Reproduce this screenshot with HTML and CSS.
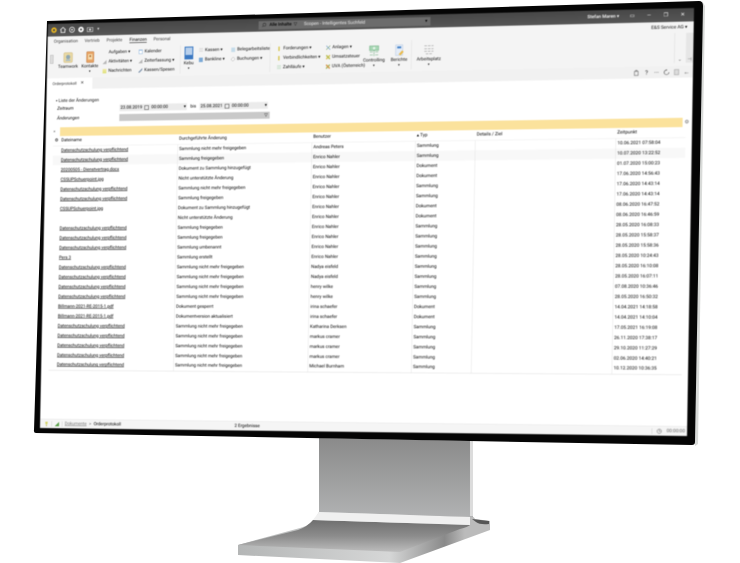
FILE: index.html
```html
<!DOCTYPE html>
<html lang="de">
<head>
<meta charset="utf-8">
<title>Orderprotokoll</title>
<link rel="stylesheet" href="styles.css">
</head>
<body>
<div class="stage">
  <svg class="hardware" width="740" height="563" viewBox="0 0 740 563">
    <defs>
      <linearGradient id="neck" x1="0" y1="0" x2="0" y2="1"><stop offset="0" stop-color="#8a8a8a"/><stop offset="1" stop-color="#b2b3b4"/></linearGradient>
      <linearGradient id="plate" x1="0" y1="0" x2="0" y2="1"><stop offset="0" stop-color="#6f6f6f"/><stop offset=".5" stop-color="#8c8c8c"/><stop offset="1" stop-color="#bdbdbd"/></linearGradient>
      <linearGradient id="front" x1="0" y1="0" x2="1" y2="0"><stop offset="0" stop-color="#b4b6b6"/><stop offset=".6" stop-color="#d6d7d7"/><stop offset=".82" stop-color="#8a8a8a"/><stop offset=".9" stop-color="#bbb"/></linearGradient>
    </defs>
    <path d="M319 438 L473 441 L473 520 L319 516 Z" fill="url(#neck)"/>
    <path d="M470 441 L473 441 L473 516 L470 516 Z" fill="#dcdcdc"/>
    <path d="M319 512 L470 517 Q474 516 475 519 L490 521 L490 530 L400 563 L238 555 L238 545 L300 528 Q313 525 319 512 Z" fill="url(#front)"/>
    <path d="M313 520 L470 525 Q468 527 460 529 L400 552 L238 545 L298 530 Q307 527 313 520 Z" fill="url(#plate)"/>
    <path d="M319 512 L470 517 L470 525 L313 520 Z" fill="#f0f0f0"/>
    <path d="M472 519 L489 521 L489 524 Q480 525 476 522 Z" fill="#555"/>
    <path d="M702 1 L705 6 L698 444 L695 446 Z" fill="#d8dad8"/>
    <path d="M47 21 L699 1 Q703 1 703 6 L695 442 Q695 445 692 445 L36 433 Q33.500 433 34 430 Z" fill="#050505"/>
  </svg>

  <main class="screen">
    <header class="titlebar">
      <div class="quick">
        <svg class="q" viewBox="0 0 12 12"><circle cx="6" cy="6" r="5" fill="#e8b622"/><circle cx="6" cy="6" r="2" fill="#4a4a4a"/></svg>
        <svg class="q" viewBox="0 0 12 12"><path d="M1 6 L6 1.500 L11 6 M2.500 5.500 V10.500 H9.500 V5.500" fill="none" stroke="#fff" stroke-width="1.300"/></svg>
        <svg class="q" viewBox="0 0 12 12"><circle cx="6" cy="6" r="4.500" fill="none" stroke="#fff" stroke-width="1.200"/><circle cx="6" cy="6" r="1.500" fill="#fff"/></svg>
        <svg class="q" viewBox="0 0 12 12"><circle cx="6" cy="6" r="5" fill="#fff"/><circle cx="6" cy="6" r="2" fill="#555"/></svg>
        <svg class="q" viewBox="0 0 12 12"><rect x="1" y="3" width="10" height="7" fill="none" stroke="#ddd"/><circle cx="6" cy="6.500" r="2" fill="#ddd"/></svg>
        <span class="qdrop">▾</span>
      </div>
      <div class="search">
        <svg class="search-icon" viewBox="0 0 12 12"><circle cx="7" cy="5" r="3.500" fill="none" stroke="#222"/><path d="M4.500 7.500 L1.500 10.500" stroke="#222"/></svg>
        <b class="scope">Alle Inhalte</b>
        <span class="funnel">▽</span>
        <span class="hint">Scopen - Intelligentes Suchfeld</span>
        <span class="search-drop">▾</span>
      </div>
      <div class="account">
        <span class="user">Stefan Maren ▾</span>
        <span class="win">▭</span>
        <span class="win">—</span>
        <span class="win">❐</span>
        <span class="win">✕</span>
      </div>
    </header>

    <section class="ribbon">
      <div class="ribbon-top">
        <nav class="tabs">
          <span class="tab t1">Organisation</span>
          <span class="tab t2">Vertrieb</span>
          <span class="tab t3">Projekte</span>
          <span class="tab t4 active">Finanzen</span>
          <span class="tab t5">Personal</span>
        </nav>
        <span class="company">E&amp;S Service AG ▾</span>
      </div>
      <div class="groups">
        <div class="grip"></div>
        <div class="big w-team">
          <svg class="bigicon" viewBox="0 0 24 24"><rect x="3" y="2" width="18" height="20" rx="2" fill="#e9d9a4" stroke="#cdb477"/><circle cx="12" cy="11" r="4.500" fill="#8ea7b4"/><rect x="7" y="16" width="10" height="3" fill="#a9bcc6"/></svg>
          <span>Teamwork</span>
        </div>
        <div class="big w-kont">
          <svg class="bigicon" viewBox="0 0 24 24"><rect x="5" y="1" width="15" height="22" rx="1" fill="#e8a465" stroke="#b9773f"/><rect x="8" y="6" width="9" height="11" fill="#f4dcae"/><circle cx="12.500" cy="10" r="2" fill="#a9682f"/></svg>
          <span>Kontakte</span>
          <span class="caret">▾</span>
        </div>
        <div class="stack w-a">
          <span class="line no-icon">Aufgaben ▾</span>
          <span class="line"><i class="ic tri"></i>Aktivitäten ▾</span>
          <span class="line"><i class="ic note"></i>Nachrichten</span>
        </div>
        <div class="stack w-b">
          <span class="line"><i class="ic cal"></i>Kalender</span>
          <span class="line"><i class="ic tri"></i>Zeiterfassung ▾</span>
          <span class="line"><i class="ic pen"></i>Kassen/Spesen</span>
        </div>
        <div class="sep"></div>
        <div class="big tallbig w-kebu">
          <svg class="bigicon tall" viewBox="0 0 24 28"><rect x="3" y="1" width="18" height="26" fill="#3b78c2"/><rect x="5" y="3" width="14" height="15" fill="#b9d0ec"/></svg>
          <span>Kebu</span>
          <span class="caret">▾</span>
        </div>
        <div class="stack w-c">
          <span class="line"><i class="ic list"></i>Kassen ▾</span>
          <span class="line"><i class="ic blue"></i>Bankline ▾</span>
        </div>
        <div class="stack w-d">
          <span class="line"><i class="ic pale"></i>Belegarbeitsliste</span>
          <span class="line"><i class="ic dia"></i>Buchungen ▾</span>
        </div>
        <div class="sep"></div>
        <div class="stack w-e">
          <span class="line"><i class="ic flag"></i>Forderungen ▾</span>
          <span class="line"><i class="ic flag"></i>Verbindlichkeiten ▾</span>
          <span class="line"><i class="ic green"></i>Zahlläufe ▾</span>
        </div>
        <div class="stack w-f">
          <span class="line"><i class="ic cross"></i>Anlagen ▾</span>
          <span class="line"><i class="ic mix"></i>Umsatzsteuer</span>
          <span class="line"><i class="ic mix2"></i>UVA (Österreich)</span>
        </div>
        <div class="big w-ctrl">
          <svg class="bigicon" viewBox="0 0 24 24"><rect x="3" y="2" width="18" height="9" fill="#a7d7b4" stroke="#6aa97c"/><circle cx="12" cy="6.500" r="2.500" fill="#e8f4ea"/><path d="M4 14 H9 M15 14 H20 M4 20 H9 M15 20 H20 M12 11 V22" stroke="#6aa97c" stroke-width="1.500" stroke-dasharray="2 1"/></svg>
          <span>Controlling</span>
          <span class="caret">▾</span>
        </div>
        <div class="big w-ber">
          <svg class="bigicon" viewBox="0 0 24 24"><rect x="5" y="1" width="14" height="21" fill="#e4ecf7" stroke="#b5c8e0"/><rect x="8" y="4" width="8" height="4" fill="#4a86c9"/><path d="M11 20 L18 12 L21 15 L15 22 Z" fill="#eab948"/></svg>
          <span>Berichte</span>
          <span class="caret">▾</span>
        </div>
        <div class="sep sep-last"></div>
        <div class="big w-arb">
          <svg class="bigicon" viewBox="0 0 24 24"><path d="M3 4 H21 M3 10 H21 M3 15 H21 M6 20 H18" stroke="#ababab" stroke-width="1.600" stroke-dasharray="5 2"/></svg>
          <span>Arbeitsplatz</span>
          <span class="caret">▾</span>
        </div>
        <div class="ribbon-end">
          <span class="chev">⌄</span>
          <span class="pin">⊣</span>
        </div>
      </div>
    </section>

    <div class="tabstrip">
      <div class="doc-tab">Orderprotokoll <span class="close">✕</span></div>
      <div class="tools">
        <svg class="tool" viewBox="0 0 12 12"><rect x="2" y="3" width="7" height="8" fill="none" stroke="#555"/><path d="M4 3 V1 H7 V3" fill="none" stroke="#555"/></svg>
        <span class="tool tool-t">?</span>
        <span class="tool tool-t">···</span>
        <svg class="tool" viewBox="0 0 12 12"><path d="M6 1.500 A4.500 4.500 0 1 0 10.500 6" fill="none" stroke="#444" stroke-width="1.200"/><path d="M6 0 V3" stroke="#444"/></svg>
        <svg class="tool" viewBox="0 0 12 12"><rect x="2" y="1" width="8" height="10" fill="#ddd" stroke="#999"/></svg>
        <span class="tool tool-t">←</span>
      </div>
    </div>

    <section class="filter">
      <div class="filter-title">▪ Liste der Änderungen</div>
      <div class="filter-row">
        <span class="flabel">Zeitraum</span>
        <span class="datefield">23.08.2019 <i class="calbox"></i> 00:00:00 <em>▾</em></span>
        <span class="bis">bis</span>
        <span class="datefield">25.08.2021 <i class="calbox"></i> 00:00:00 <em>▾</em></span>
      </div>
      <div class="filter-row">
        <span class="flabel">Änderungen</span>
        <span class="selectfield">▽</span>
      </div>
    </section>

    <div class="groupbar-row">
      <span class="pinmark">×</span>
      <div class="groupbar"></div>
      <span class="gear">⚙</span>
    </div>

    <table class="grid">
      <colgroup>
        <col class="c0"><col class="c1"><col class="c2"><col class="c3"><col class="c4"><col class="c5"><col class="c6">
      </colgroup>
      <thead>
        <tr><th>⚙</th><th>Dateiname</th><th>Durchgeführte Änderung</th><th>Benutzer</th><th>▴ Typ</th><th>Details / Ziel</th><th>Zeitpunkt</th></tr>
      </thead>
      <tbody>
        <tr><td></td><td class="link">Datenschutzschulung verpflichtend</td><td>Sammlung nicht mehr freigegeben</td><td>Andreas Peters</td><td>Sammlung</td><td></td><td>10.06.2021 07:58:04</td></tr>
        <tr class="alt"><td></td><td class="link">Datenschutzschulung verpflichtend</td><td>Sammlung freigegeben</td><td>Enrico Nahler</td><td>Sammlung</td><td></td><td>10.07.2020 13:22:52</td></tr>
        <tr><td></td><td class="link">20200505 - Dienstvertrag.docx</td><td>Dokument zu Sammlung hinzugefügt</td><td>Enrico Nahler</td><td>Dokument</td><td></td><td>01.07.2020 15:00:23</td></tr>
        <tr><td></td><td class="link">CSSUPSchuerpoint.jpg</td><td>Nicht unterstützte Änderung</td><td>Enrico Nahler</td><td>Dokument</td><td></td><td>17.06.2020 14:56:43</td></tr>
        <tr><td></td><td class="link">Datenschutzschulung verpflichtend</td><td>Sammlung nicht mehr freigegeben</td><td>Enrico Nahler</td><td>Sammlung</td><td></td><td>17.06.2020 14:43:14</td></tr>
        <tr><td></td><td class="link">Datenschutzschulung verpflichtend</td><td>Sammlung freigegeben</td><td>Enrico Nahler</td><td>Sammlung</td><td></td><td>17.06.2020 14:43:14</td></tr>
        <tr><td></td><td class="link">CSSUPSchuerpoint.jpg</td><td>Dokument zu Sammlung hinzugefügt</td><td>Enrico Nahler</td><td>Dokument</td><td></td><td>08.06.2020 16:47:52</td></tr>
        <tr><td></td><td class="link"></td><td>Nicht unterstützte Änderung</td><td>Enrico Nahler</td><td>Dokument</td><td></td><td>08.06.2020 16:46:59</td></tr>
        <tr><td></td><td class="link">Datenschutzschulung verpflichtend</td><td>Sammlung freigegeben</td><td>Enrico Nahler</td><td>Sammlung</td><td></td><td>28.05.2020 16:08:33</td></tr>
        <tr><td></td><td class="link">Datenschutzschulung verpflichtend</td><td>Sammlung freigegeben</td><td>Enrico Nahler</td><td>Sammlung</td><td></td><td>28.05.2020 15:58:37</td></tr>
        <tr><td></td><td class="link">Datenschutzschulung verpflichtend</td><td>Sammlung umbenannt</td><td>Enrico Nahler</td><td>Sammlung</td><td></td><td>28.05.2020 15:58:36</td></tr>
        <tr><td></td><td class="link">Pers 3</td><td>Sammlung erstellt</td><td>Enrico Nahler</td><td>Sammlung</td><td></td><td>28.05.2020 10:24:43</td></tr>
        <tr><td></td><td class="link">Datenschutzschulung verpflichtend</td><td>Sammlung nicht mehr freigegeben</td><td>Nadya eisfeld</td><td>Sammlung</td><td></td><td>28.05.2020 16:10:08</td></tr>
        <tr><td></td><td class="link">Datenschutzschulung verpflichtend</td><td>Sammlung nicht mehr freigegeben</td><td>Nadya eisfeld</td><td>Sammlung</td><td></td><td>28.05.2020 16:07:11</td></tr>
        <tr><td></td><td class="link">Datenschutzschulung verpflichtend</td><td>Sammlung nicht mehr freigegeben</td><td>henry wilke</td><td>Sammlung</td><td></td><td>07.08.2020 10:36:46</td></tr>
        <tr><td></td><td class="link">Datenschutzschulung verpflichtend</td><td>Sammlung nicht mehr freigegeben</td><td>henry wilke</td><td>Sammlung</td><td></td><td>28.05.2020 16:50:32</td></tr>
        <tr><td></td><td class="link">Billmann-2021-RE-2015-1.pdf</td><td>Dokument gesperrt</td><td>irina schaefer</td><td>Dokument</td><td></td><td>14.04.2021 14:18:58</td></tr>
        <tr><td></td><td class="link">Billmann-2021-RE-2015-1.pdf</td><td>Dokumentversion aktualisiert</td><td>irina schaefer</td><td>Dokument</td><td></td><td>14.04.2021 14:10:04</td></tr>
        <tr><td></td><td class="link">Datenschutzschulung verpflichtend</td><td>Sammlung nicht mehr freigegeben</td><td>Katharina Derksen</td><td>Sammlung</td><td></td><td>17.05.2021 16:19:08</td></tr>
        <tr><td></td><td class="link">Datenschutzschulung verpflichtend</td><td>Sammlung nicht mehr freigegeben</td><td>markus cramer</td><td>Sammlung</td><td></td><td>26.11.2020 17:38:17</td></tr>
        <tr><td></td><td class="link">Datenschutzschulung verpflichtend</td><td>Sammlung nicht mehr freigegeben</td><td>markus cramer</td><td>Sammlung</td><td></td><td>29.10.2020 11:27:29</td></tr>
        <tr><td></td><td class="link">Datenschutzschulung verpflichtend</td><td>Sammlung nicht mehr freigegeben</td><td>markus cramer</td><td>Sammlung</td><td></td><td>02.06.2020 14:40:21</td></tr>
        <tr><td></td><td class="link">Datenschutzschulung verpflichtend</td><td>Sammlung nicht mehr freigegeben</td><td>Michael Burnham</td><td>Sammlung</td><td></td><td>10.12.2020 10:36:35</td></tr>
      </tbody>
    </table>

    <footer class="statusbar">
      <div class="status-left">
        <svg class="st" viewBox="0 0 12 12"><path d="M3 1 H9 L8 7 H4 Z" fill="#d6d56a"/><rect x="5" y="8" width="2" height="3" fill="#b5b54a"/></svg>
        <i class="vbar"></i>
        <svg class="st" viewBox="0 0 12 12"><path d="M1 11 H11 V1 Z" fill="#5aa04a"/></svg>
        <i class="vbar"></i>
        <span class="crumb">Dokumente</span>
        <span class="crumbsep">&gt;</span>
        <span class="crumb-now">Orderprotokoll</span>
      </div>
      <span class="results">2 Ergebnisse</span>
      <div class="status-right">
        <i class="vbar"></i>
        <svg class="st" viewBox="0 0 12 12"><circle cx="6" cy="6" r="4.500" fill="none" stroke="#555"/><path d="M6 3 V6 H8.500" fill="none" stroke="#555"/></svg>
        <span class="clock">00:00:00</span>
      </div>
    </footer>
  </main>
</div>
</body>
</html>
```
FILE: styles.css
```css
* { box-sizing: border-box; }
html, body { margin: 0; padding: 0; background: #fff; overflow: hidden; }
.stage { position: relative; width: 740px; height: 563px; overflow: hidden; }
.hardware { position: absolute; left: 0; top: 0; }

.screen {
  position: absolute; left: 0; top: 0;
  width: 1292px; height: 830px;
  transform-origin: 0 0;
  transform: matrix3d(0.46990, -0.012731, 0, -0.000043371,
                      -0.0097423, 0.48564, 0, -0.0000025925,
                      0, 0, 1, 0,
                      48, 24, 0, 1);
  will-change: transform;
  filter: blur(0.8px);
  background: #fff;
  display: flex; flex-direction: column;
  font: 9px/1.2 Roboto, "Liberation Sans", sans-serif;
  text-rendering: geometricPrecision;
  color: #000;
  overflow: hidden;
}

/* title bar */
.titlebar { height: 26px; flex: none; background: linear-gradient(#474747, #565656); display: flex; align-items: center; color: #fff; padding: 0 14px 0 6px; }
.quick { width: 432px; display: flex; align-items: center; gap: 5px; }
.q { width: 14px; height: 14px; }
.qdrop { color: #ddd; margin-left: 3px; }
.search { width: 345px; height: 17px; background: #6c6c6c; display: flex; align-items: center; padding: 0 6px; }
.search-icon { width: 10px; height: 10px; margin-right: 6px; }
.scope { color: #000; font-weight: 500; }
.funnel { color: #000; margin: 0 14px 0 4px; }
.hint { color: #eee; flex: 1; }
.search-drop { color: #000; }
.account { flex: 1; display: flex; justify-content: flex-end; align-items: center; gap: 18px; font-weight: 500; }
.win { width: 14px; text-align: center; font-size: 10px; font-weight: 400; }

/* ribbon */
.ribbon { height: 86px; flex: none; background: #f4f4f4; display: flex; flex-direction: column; }
.ribbon-top { height: 22px; flex: none; display: flex; justify-content: space-between; align-items: center; padding: 0 12px 0 13px; }
.tabs { display: flex; color: #444; }
.t1 { width: 65px; } .t2 { width: 46px; } .t3 { width: 48px; } .t4 { width: 50px; } .t5 { width: 50px; }
.active { color: #000; text-decoration: underline; text-underline-offset: 3px; }
.company { color: #111; }
.groups { flex: 1; display: flex; align-items: stretch; padding: 0 0 3px 6px; }
.grip { width: 7px; height: 18px; margin: 16px 1px 0 0; border: 1px solid #b4b4b4; background: #ddd; }
.big { display: flex; flex-direction: column; align-items: center; padding-top: 10px; color: #111; }
.bigicon { width: 24px; height: 24px; flex: none; margin-bottom: 2px; }
.tallbig { padding-top: 4px; }
.bigicon.tall { height: 28px; }
.caret { font-size: 7px; line-height: 7px; margin-top: 1px; color: #111; }
.w-team { width: 46px; margin-left: 7px; }
.w-kont { width: 46px; }
.stack { display: flex; flex-direction: column; gap: 8px; padding-top: 8px; }
.line { display: flex; align-items: center; gap: 4px; height: 11px; white-space: nowrap; color: #111; }
.no-icon { padding-left: 12px; }
.ic { width: 8px; height: 9px; flex: none; display: block; }
.tri { background: linear-gradient(135deg, transparent 50%, #b8b8b8 50%); }
.note { background: linear-gradient(#f0e9a6, #dfe27a); }
.cal { background: #fff; border: 1px solid #8fb6dd; border-top-width: 2px; }
.pen { background: linear-gradient(135deg, transparent 45%, #8b9db3 45%, #8b9db3 65%, transparent 65%); }
.list { background: repeating-linear-gradient(#c4c4c4 0 1px, #f7f7f7 1px 3px); }
.blue { background: #7ba9d6; }
.pale { background: #c5dcea; }
.dia { background: #fff; border: 1px solid #a0a0a0; transform: rotate(45deg) scale(.75); }
.flag { background: linear-gradient(90deg, transparent 30%, #d8c95a 30%, #d8c95a 65%, transparent 65%); }
.green { background: repeating-linear-gradient(#a8cfae 0 1px, #f4f4f4 1px 3px); }
.cross { background: linear-gradient(45deg, transparent 42%, #7ba4c9 42%, #7ba4c9 58%, transparent 58%), linear-gradient(-45deg, transparent 42%, #8eb083 42%, #8eb083 58%, transparent 58%); }
.mix { background: linear-gradient(45deg, transparent 40%, #b7bf55 40%, #b7bf55 60%, transparent 60%), linear-gradient(-45deg, transparent 40%, #d9c25e 40%, #d9c25e 60%, transparent 60%); }
.mix2 { background: linear-gradient(45deg, transparent 40%, #d59a4f 40%, #d59a4f 60%, transparent 60%), linear-gradient(-45deg, transparent 40%, #a5bb66 40%, #a5bb66 60%, transparent 60%); }
.w-a { width: 75px; margin-left: 4px; }
.w-b { width: 86px; }
.sep { width: 1px; background: #e0e0e0; margin: 2px 0 1px; }
.w-kebu { width: 34px; }
.w-c { width: 66px; margin-left: 4px; }
.w-d { width: 79px; }
.w-e { width: 99px; margin-left: 14px; }
.w-f { width: 68px; }
.w-ctrl { width: 56px; }
.w-ber { width: 44px; }
.sep-last { margin-left: 2px; }
.w-arb { width: 68px; }
.ribbon-end { margin-left: auto; width: 36px; display: flex; align-items: flex-end; justify-content: space-between; margin-bottom: 3px; padding: 0 3px 0 6px; border-left: 1px solid #dcdcdc; color: #555; background: linear-gradient(90deg, #f4f4f4 60%, #e6e6e6 60%); }

/* tab strip */
.tabstrip { height: 23px; flex: none; background: #f1f1f1; display: flex; justify-content: space-between; align-items: center; }
.doc-tab { height: 23px; width: 96px; background: #fff; padding-left: 12px; display: flex; align-items: center; gap: 8px; font-size: 8px; color: #333; white-space: nowrap; }
.close { font-size: 9px; color: #333; }
.tools { display: flex; align-items: center; gap: 7px; padding-right: 6px; color: #333; font-size: 12px; }
.tool { width: 12px; height: 12px; }
.tool-t { line-height: 12px; text-align: center; }

/* filter */
.filter { flex: none; height: 78px; padding: 18px 0 0 20px; }
.filter-title { color: #111; height: 12px; line-height: 12px; }
.filter-row { display: flex; align-items: center; height: 20px; }
.flabel { width: 134px; padding-left: 3px; font-style: italic; }
.datefield { width: 140px; height: 14px; background: #ebebeb; display: flex; align-items: center; gap: 5px; padding: 0 2px; }
.datefield em { margin-left: auto; font-style: normal; }
.calbox { width: 9px; height: 9px; border: 1px solid #444; display: block; }
.bis { width: 26px; text-align: center; }
.selectfield { width: 310px; height: 14px; background: #c9c9c9; display: flex; justify-content: flex-end; align-items: center; padding-right: 4px; }

/* grouping bar */
.groupbar-row { flex: none; height: 18px; display: flex; align-items: center; padding: 0 2px 0 16px; }
.pinmark { width: 14px; font-size: 8px; color: #555; }
.groupbar { flex: 1; height: 18px; background: #fbe29c; }
.gear { width: 16px; text-align: center; color: #666; font-size: 10px; }

/* table */
.grid { flex: none; width: 1264px; margin-left: 16px; border-collapse: collapse; table-layout: fixed; }
.c0 { width: 14px; } .c1 { width: 246px; } .c2 { width: 274px; } .c3 { width: 207px; } .c4 { width: 118px; } .c5 { width: 272px; } .c6 { width: 133px; }
.grid th { height: 20px; font-weight: 400; text-align: left; padding: 0 3px; border-bottom: 1px solid #ececec; white-space: nowrap; }
.grid td { height: 20px; padding: 0 3px; white-space: nowrap; border-right: 1px solid #e4e4e4; }
.grid td:first-child { border-right: 0; }
.grid td:last-child { border-right: 0; }
.grid tbody tr:last-child td { border-bottom: 1px solid #dedede; }
.grid .alt td { background: #f8f8f8; }
.link { text-decoration: underline; }

/* status bar */
.statusbar { margin-top: auto; height: 19px; flex: none; background: #f5f5f5; border-top: 1px solid #e6e6e6; display: flex; align-items: center; padding: 0 4px 0 8px; }
.status-left { width: 396px; display: flex; align-items: center; gap: 5px; }
.st { width: 11px; height: 11px; }
.vbar { width: 1px; height: 11px; background: #ccc; display: block; }
.crumb { color: #777; text-decoration: underline; }
.crumbsep { color: #666; }
.crumb-now { color: #000; }
.results { flex: 1; }
.status-right { display: flex; align-items: center; gap: 8px; color: #666; }
```
